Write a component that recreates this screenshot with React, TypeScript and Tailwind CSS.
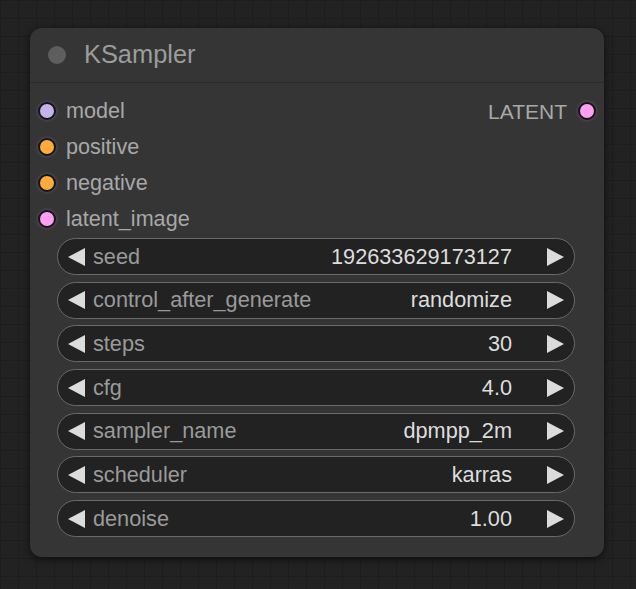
import React from 'react';

type Slot = { name: string; color: string };

const inputs: Slot[] = [
  { name: 'model', color: 'bg-[#c3b2ee]' },
  { name: 'positive', color: 'bg-[#ffab3c]' },
  { name: 'negative', color: 'bg-[#ffab3c]' },
  { name: 'latent_image', color: 'bg-[#ff9ef5]' },
];

const widgets = [
  { label: 'seed', value: '192633629173127' },
  { label: 'control_after_generate', value: 'randomize' },
  { label: 'steps', value: '30' },
  { label: 'cfg', value: '4.0' },
  { label: 'sampler_name', value: 'dpmpp_2m' },
  { label: 'scheduler', value: 'karras' },
  { label: 'denoise', value: '1.00' },
];

function Dot({ color }: { color: string }) {
  return (
    <span
      className={`block w-[18px] h-[18px] rounded-full border-[2.5px] border-[#151515] shadow-[0_0_3px_1px_rgba(200,180,255,0.18)] ${color}`}
    />
  );
}

function Arrow({ dir }: { dir: 'left' | 'right' }) {
  return (
    <svg width="17" height="18" viewBox="0 0 17 18" className="shrink-0">
      {dir === 'left' ? (
        <polygon points="17,0 17,18 0,9" fill="#dcdcdc" />
      ) : (
        <polygon points="0,0 0,18 17,9" fill="#dcdcdc" />
      )}
    </svg>
  );
}

function Widget({ label, value }: { label: string; value: string }) {
  return (
    <div className="flex items-center h-[37px] rounded-full border-[1.5px] border-[#6a6a6a] bg-[#222222] pl-[10px] pr-[10px]">
      <Arrow dir="left" />
      <span className="ml-[8px] text-[21.7px] text-[#9a9a9a] leading-none">{label}</span>
      <span className="ml-auto mr-[35px] text-[21.7px] text-[#dddddd] leading-none">{value}</span>
      <Arrow dir="right" />
    </div>
  );
}

export default function App() {
  return (
    <div
      className="w-[636px] h-[589px] pt-[28px] pl-[30px] bg-[#222222] bg-[linear-gradient(#1d1d1d_1px,transparent_1px),linear-gradient(90deg,#1d1d1d_1px,transparent_1px)] bg-[size:18px_18px] overflow-hidden"
      style={{ fontFamily: '"Liberation Sans", Arial, sans-serif' }}
    >
      <div className="w-[574px] h-[529px] rounded-[12px] bg-[#353535] shadow-[0_2px_8px_rgba(0,0,0,0.6)] flex flex-col">
        {/* title */}
        <div className="h-[55px] flex items-center border-b border-[#2b2b2b] pl-[18px] shrink-0">
          <span className="w-[18px] h-[18px] rounded-full bg-[#5e5e5e]" />
          <span className="ml-[18px] text-[25.4px] text-[#9c9c9c] leading-none">KSampler</span>
        </div>

        {/* slots */}
        <div className="pt-[10px] flex">
          <div className="flex flex-col">
            {inputs.map((s) => (
              <div key={s.name} className="h-[36px] flex items-center pl-[8px]">
                <Dot color={s.color} />
                <span className="ml-[10px] text-[21.6px] text-[#a8a8a8] leading-none">{s.name}</span>
              </div>
            ))}
          </div>
          <div className="ml-auto h-[36px] flex items-center pr-[8px]">
            <span className="text-[21px] text-[#a8a8a8] leading-none">LATENT</span>
            <span className="ml-[11px]">
              <Dot color="bg-[#ff9ef5]" />
            </span>
          </div>
        </div>

        {/* widgets */}
        <div className="mt-[1px] pl-[27px] pr-[29px] flex flex-col gap-[6.7px]">
          {widgets.map((w) => (
            <Widget key={w.label} label={w.label} value={w.value} />
          ))}
        </div>
      </div>
    </div>
  );
}
